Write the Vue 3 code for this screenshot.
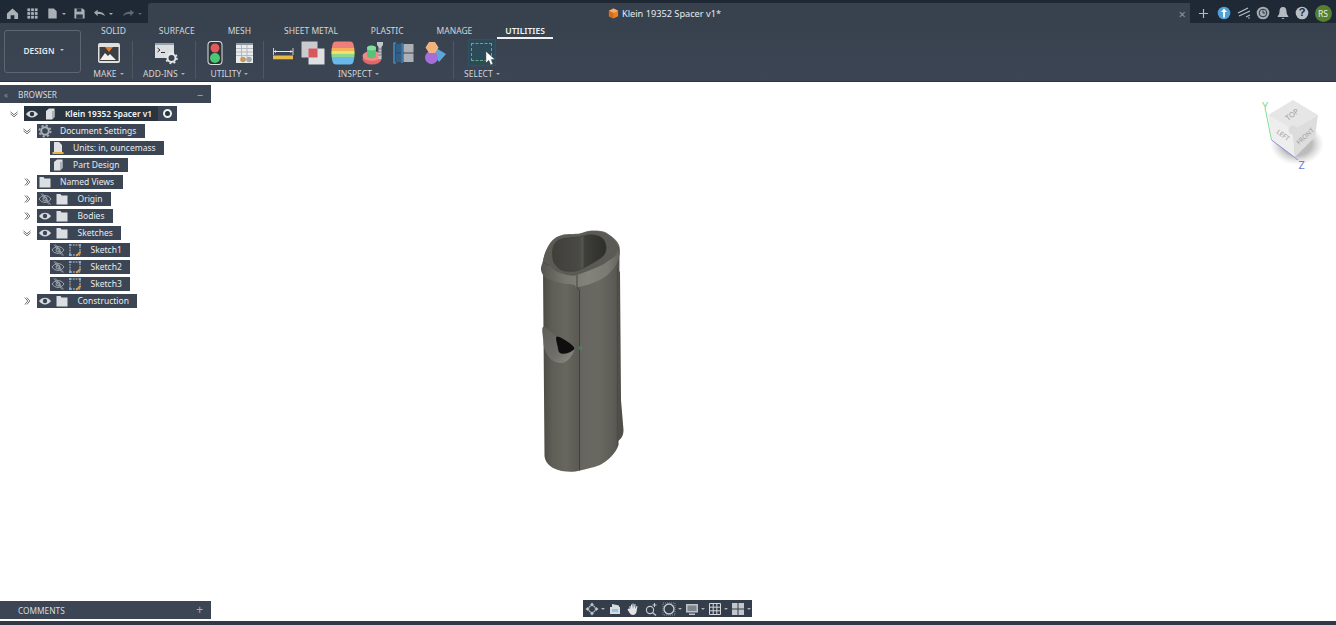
<script setup>
const tabs = [
  { name: 'SOLID' }, { name: 'SURFACE' }, { name: 'MESH' }, { name: 'SHEET METAL' },
  { name: 'PLASTIC' }, { name: 'MANAGE' }, { name: 'UTILITIES', active: true }
]
const rows = [
  { label: 'Document Settings', level: 1, chev: 'down', icons: ['gear'] },
  { label: 'Units: in, ouncemass', level: 2, icons: ['doc'] },
  { label: 'Part Design', level: 2, icons: ['box'] },
  { label: 'Named Views', level: 1, chev: 'right', icons: ['folder'] },
  { label: 'Origin', level: 1, chev: 'right', icons: ['off', 'folder'] },
  { label: 'Bodies', level: 1, chev: 'right', icons: ['eye', 'folder'] },
  { label: 'Sketches', level: 1, chev: 'down', icons: ['eye', 'folder'] },
  { label: 'Sketch1', level: 2, icons: ['off', 'sketch'] },
  { label: 'Sketch2', level: 2, icons: ['off', 'sketch'] },
  { label: 'Sketch3', level: 2, icons: ['off', 'sketch'] },
  { label: 'Construction', level: 1, chev: 'right', icons: ['eye', 'folder'] }
]

// closed Catmull-Rom curve through traced outline points of the 3D model
function smooth(p) {
  const n = p.length
  let d = `M${p[0][0]} ${p[0][1]}`
  for (let i = 0; i < n; i++) {
    const a = p[(i - 1 + n) % n], b = p[i], c = p[(i + 1) % n], e = p[(i + 2) % n]
    const c1 = [b[0] + (c[0] - a[0]) / 6, b[1] + (c[1] - a[1]) / 6]
    const c2 = [c[0] - (e[0] - b[0]) / 6, c[1] - (e[1] - b[1]) / 6]
    d += `C${c1[0].toFixed(1)} ${c1[1].toFixed(1)} ${c2[0].toFixed(1)} ${c2[1].toFixed(1)} ${c[0]} ${c[1]}`
  }
  return d + 'Z'
}
const holePath = smooth([[552.7,249.7],[555.3,243],[562.7,238.7],[579.3,237],[591,234.7],[601,237.3],[605.3,243],[606,249.7],[602.7,256.3],[592.7,263],[579.3,269.7],[571,271.3],[561,269.7],[554.3,263],[552.7,256.3]])
const facePath = smooth([[543.3,261.3],[546,251.3],[552.7,240.7],[562.7,235.3],[579.3,234],[589.3,231.3],[602.7,232],[612.7,238],[617.7,246.3],[616,254.7],[607.7,261.3],[599.3,266.3],[577.7,274.7],[569.3,275.3],[556,271.3],[547.7,264]])
const collarPath = smooth([[541,269.7],[543,261],[546,250.5],[552.7,240],[562.7,234.7],[579.3,233.5],[589.3,230.7],[602.7,231.3],[613,237.5],[619,245],[619.5,254.7],[616,264.7],[606,276.3],[592.7,283],[577,287.3],[574.3,285],[561,283],[546,278]])
const scoopPath = smooth([[543.3,326.7],[556.7,336.7],[568,342],[574.3,348.3],[570,358],[561.7,363],[551.7,360],[545,350],[543.3,340]])
const slotPath = smooth([[556.7,336.7],[568,342],[574.3,348.3],[568,353],[560,353],[557.7,346.7]])
</script>

<template>
  <div class="app">
    <header class="titlebar">
      <div class="qat">
        <svg class="qi" viewBox="0 0 14 14"><path d="M7 1.500 1 7v6h4V9h4v4h4V7z" fill="#aab0b7"/></svg>
        <svg class="qi" viewBox="0 0 14 14"><g fill="#aab0b7"><rect x="1.500" y="1.500" width="3" height="3"/><rect x="5.500" y="1.500" width="3" height="3"/><rect x="9.500" y="1.500" width="3" height="3"/><rect x="1.500" y="5.500" width="3" height="3"/><rect x="5.500" y="5.500" width="3" height="3"/><rect x="9.500" y="5.500" width="3" height="3"/><rect x="1.500" y="9.500" width="3" height="3"/><rect x="5.500" y="9.500" width="3" height="3"/><rect x="9.500" y="9.500" width="3" height="3"/></g></svg>
        <span class="qgroup">
          <svg class="qi" viewBox="0 0 14 14"><path d="M2.500 1.500h6l3 3v8h-9z" fill="#aab0b7"/></svg>
          <i class="caret"></i>
        </span>
        <svg class="qi" viewBox="0 0 14 14"><path d="M1.500 1.500h9l2 2v9h-11z" fill="#aab0b7"/><rect x="4" y="1.500" width="5" height="3.500" fill="#2a3440"/><rect x="3.500" y="8" width="7" height="4.500" fill="#2a3440"/></svg>
        <span class="qgroup">
          <svg class="qi" viewBox="0 0 14 14"><path d="M1 6 5 3v2c4 0 7 1 8 5-2-2-4-2.500-8-2.500V10z" fill="#a0a6ad"/></svg>
          <i class="caret"></i>
        </span>
        <span class="qgroup dim">
          <svg class="qi" viewBox="0 0 14 14"><path d="M13 6 9 3v2c-4 0-7 1-8 5 2-2 4-2.500 8-2.500V10z" fill="#aeb4bb"/></svg>
          <i class="caret"></i>
        </span>
      </div>
      <div class="doctab">
        <div class="doctitle">
          <svg class="cube-ico" viewBox="0 0 12 12"><path d="M6 .5 11 3v6l-5 2.500L1 9V3z" fill="#e8812a"/><path d="M6 .5 11 3 6 5.500 1 3z" fill="#f6ad62"/><path d="M6 5.500v6L1 9V3z" fill="#d56c1c"/></svg>
          <span>Klein 19352 Spacer v1*</span>
        </div>
        <span class="close">×</span>
      </div>
      <div class="sysicons">
        <svg class="plus" viewBox="0 0 12 12"><path d="M6 1v10M1 6h10" stroke="#b4bac1" stroke-width="1.300"/></svg>
        <svg class="si" viewBox="0 0 14 14"><circle cx="7" cy="7" r="6.300" fill="#4f9fd8"/><path d="M7 2.500 10 6H8v5.500H6V6H4z" fill="#fff"/></svg>
        <svg class="si" viewBox="0 0 14 14"><path d="M1 7 11 2M2 10 13 5M9 11l4-2" stroke="#b7bdc4" stroke-width="1.200" fill="none"/><circle cx="12" cy="12" r=".8" fill="#b7bdc4"/></svg>
        <svg class="si" viewBox="0 0 14 14"><circle cx="7" cy="7" r="6.300" fill="#a5abb2"/><circle cx="7" cy="7" r="3.800" fill="none" stroke="#2a3440" stroke-width="1"/><path d="M7 4.500V7h2.200" stroke="#2a3440" fill="none"/></svg>
        <svg class="si" viewBox="0 0 14 14"><path d="M7 1c-2.500 0-3.500 2-3.500 4.500 0 2-.8 3.500-1.800 4.500v1h10.600v-1c-1-1-1.800-2.500-1.800-4.500C10.500 3 9.500 1 7 1zM5.500 12a1.600 1.600 0 0 0 3 0z" fill="#b4bac1"/></svg>
        <svg class="si" viewBox="0 0 14 14"><circle cx="7" cy="7" r="6.300" fill="#b9bfc6"/><text x="7" y="10.300" text-anchor="middle" class="qmark">?</text></svg>
        <span class="avatar">RS</span>
      </div>
    </header>

    <section class="ribbon">
      <div class="design">DESIGN <i class="caret light"></i></div>
      <div class="tools">
        <nav class="tabs">
          <span v-for="t in tabs" :key="t.name" class="tab" :class="{ active: t.active }">{{ t.name }}</span>
        </nav>
        <div class="panels">
          <div class="panel p-make">
            <div class="picons">
              <svg class="ico" viewBox="0 0 24 24"><rect x="1" y="2" width="22" height="20" rx="2" fill="#dfdfdd"/><rect x="2.500" y="6" width="19" height="14" fill="#3a3f46"/><path d="M8 6h8l-4 5z" fill="#e77c25"/><path d="M3 19l5-7 3 3 2-2 6 6z" fill="#f4f1ec"/></svg>
            </div>
            <div class="plabel">MAKE <i class="caret"></i></div>
          </div>
          <div class="panel p-addins">
            <div class="picons">
              <svg class="ico" viewBox="0 0 24 24"><rect x="1" y="2" width="19" height="15" fill="#dcdfe2"/><rect x="1" y="2" width="19" height="2" fill="#9aa1a8"/><path d="M3.500 7l2.500 2-2.500 2M7 11.500h4" stroke="#333" fill="none"/><circle cx="17.500" cy="17" r="4" fill="#3a4452" stroke="#e6e8ea" stroke-width="2"/><circle cx="17.500" cy="17" r="5.500" fill="none" stroke="#e6e8ea" stroke-width="1.500" stroke-dasharray="2 2.300"/></svg>
            </div>
            <div class="plabel">ADD-INS <i class="caret"></i></div>
          </div>
          <div class="panel p-utility">
            <div class="picons">
              <svg class="ico" viewBox="0 0 24 24"><rect x="4.500" y="0" width="15" height="24" rx="4" fill="#dfe1e3"/><rect x="5.500" y="1" width="13" height="22" rx="3" fill="#2e3338"/><circle cx="12" cy="7" r="4.500" fill="#e35a5a"/><circle cx="12" cy="17" r="5" fill="#48c774"/></svg>
              <svg class="ico" viewBox="0 0 24 24"><rect x="3" y="2" width="17" height="20" fill="#e9ecee"/><path d="M3 3h17" stroke="#8f969d" stroke-width="2"/><path d="M3 7.500h17M3 11h17M3 14.500h17M8.500 4v12M14 4v12" stroke="#a7adb3" stroke-width=".8"/><circle cx="10" cy="18.500" r="2.800" fill="#c69a5a"/><circle cx="16" cy="18.500" r="2.800" fill="#a3a8ad"/></svg>
            </div>
            <div class="plabel">UTILITY <i class="caret"></i></div>
          </div>
          <div class="panel p-inspect">
            <div class="picons">
              <svg class="ico" viewBox="0 0 24 24"><path d="M2.500 7v7M22 7v7" stroke="#c9cdd2"/><path d="M3 10.500h18.500" stroke="#e6e8ea"/><path d="M3 10.500l2-1.500v3zM21.500 10.500l-2-1.500v3z" fill="#e6e8ea"/><rect x="2" y="14.500" width="20" height="3.800" fill="#e8b94b"/></svg>
              <svg class="ico" viewBox="0 0 24 24"><rect x="0.500" y="0.500" width="16" height="16" fill="#c9cbce"/><rect x="7.500" y="7.500" width="16" height="16" fill="#dfe0e2"/><rect x="7.500" y="7.500" width="9" height="9" fill="#d8575e"/></svg>
              <svg class="ico" viewBox="0 0 24 24"><defs><clipPath id="bar"><path d="M5 .5h14c2 0 3 1 3.500 3 1.500 6 1.500 11 0 17-.5 2-1.500 3-3.500 3H5c-2 0-3-1-3.500-3-1.500-6-1.500-11 0-17C2 1.500 3 .5 5 .5z"/></clipPath></defs><g clip-path="url(#bar)"><rect y="0" width="24" height="7" fill="#ef7f7a"/><rect y="7" width="24" height="3" fill="#f5b25a"/><rect y="10" width="24" height="3" fill="#ece36c"/><rect y="13" width="24" height="3" fill="#8ed88c"/><rect y="16" width="24" height="8" fill="#69b8ea"/></g></svg>
              <svg class="ico" viewBox="0 0 24 24"><ellipse cx="10" cy="18" rx="9.500" ry="5.500" fill="#e0666a"/><ellipse cx="10" cy="15" rx="9.500" ry="5" fill="#ef8a84"/><path d="M5 7c0-3 9-3 9 0v8c0 3-9 3-9 0z" fill="#58c27a"/><ellipse cx="9.500" cy="7" rx="4.500" ry="2.500" fill="#84dc9a"/><path d="M15 1h6v3l-1.500 2v12h-3V6L15 4z" fill="#c2c6ca"/><path d="M16.500 8h3M16.500 11h3M16.500 14h3" stroke="#6c7178"/></svg>
              <svg class="ico" viewBox="0 0 24 24"><path d="M4 2H2v20h2M10 2v20" fill="none" stroke="#4d9ddb" stroke-width="1.200"/><rect x="3.500" y="3" width="6" height="8.500" fill="#2f5f86"/><rect x="3.500" y="12.500" width="6" height="8.500" fill="#2f5f86"/><rect x="11.500" y="3" width="10" height="8.500" fill="#adb1b6"/><rect x="11.500" y="12.500" width="10" height="8.500" fill="#adb1b6"/></svg>
              <svg class="ico" viewBox="0 0 24 24"><path d="M14 7 24 13 17 21 11 13z" fill="#5ba7dc"/><circle cx="9.500" cy="16.500" r="6.500" fill="#a66fd8"/><path d="M7 1h6l3.500 5.500L13 12H7L3.500 6.500z" fill="#f1b27e"/></svg>
            </div>
            <div class="plabel">INSPECT <i class="caret"></i></div>
          </div>
          <div class="panel p-select">
            <div class="picons">
              <div class="selbox">
                <span class="dash"></span>
                <svg class="cursor" viewBox="0 0 12 16"><path d="M1 0v13l3.200-3 2 5 2.500-1-2-4.800H11z" fill="#fff" stroke="#333" stroke-width=".5"/></svg>
              </div>
            </div>
            <div class="plabel">SELECT <i class="caret"></i></div>
          </div>
        </div>
      </div>
    </section>

    <main class="viewport">
      <aside class="browser">
        <div class="phead">
          <span class="collapse">«</span>
          <span class="ptitle">BROWSER</span>
          <span class="pbtn">−</span>
        </div>
        <ul class="tree">
          <li class="row lvl0">
            <svg class="chev" viewBox="0 0 10 10"><path d="M1.500 2.800 5 5.800l3.500-3M1.500 4.800 5 7.800l3.500-3" fill="none" stroke="#6f7680"/></svg>
            <div class="pill root">
              <span class="ri"><svg viewBox="0 0 14 14"><path d="M1 7c3-4.500 9-4.500 12 0-3 4.500-9 4.500-12 0z" fill="#d7dbdf"/><circle cx="7" cy="7" r="2.200" fill="#2a3340"/></svg></span>
              <span class="ri"><svg viewBox="0 0 14 14"><path d="M3 4 6 1.500h5.500V10L9 12.500H3z" fill="#dcdfe2"/><path d="M9 4h2.500v6L9 12.500z" fill="#aab0b6"/></svg></span>
              <span class="txt">Klein 19352 Spacer v1</span>
              <span class="radio"><i></i></span>
            </div>
          </li>
          <li v-for="r in rows" :key="r.label" class="row" :class="'lvl' + r.level">
            <svg v-if="r.chev === 'down'" class="chev" viewBox="0 0 10 10"><path d="M1.500 2.800 5 5.800l3.500-3M1.500 4.800 5 7.800l3.500-3" fill="none" stroke="#6f7680"/></svg>
            <svg v-else-if="r.chev === 'right'" class="chev" viewBox="0 0 10 10"><path d="M2.800 1.500 5.800 5l-3 3.500M4.800 1.500 7.800 5l-3 3.500" fill="none" stroke="#6f7680"/></svg>
            <div class="pill">
              <span v-for="(ic, i) in r.icons" :key="i" class="ri">
                <svg v-if="ic === 'eye'" viewBox="0 0 14 14"><path d="M1 7c3-4.500 9-4.500 12 0-3 4.500-9 4.500-12 0z" fill="#d7dbdf"/><circle cx="7" cy="7" r="2.200" fill="#3b4554"/></svg>
                <svg v-else-if="ic === 'off'" viewBox="0 0 14 14"><path d="M1 7c3-4.500 9-4.500 12 0-3 4.500-9 4.500-12 0z" fill="none" stroke="#a4aab1"/><circle cx="7" cy="7" r="2" fill="none" stroke="#a4aab1"/><path d="M3 1.500 11 12.500M4.500 1.500l8 11" stroke="#a4aab1" stroke-width=".8"/></svg>
                <svg v-else-if="ic === 'folder'" viewBox="0 0 14 14"><path d="M1.500 2h4l1 1.500h6V12.500h-11z" fill="#dcdfe2"/></svg>
                <svg v-else-if="ic === 'gear'" viewBox="0 0 14 14"><circle cx="7" cy="7" r="3.800" fill="none" stroke="#a9afb6" stroke-width="2"/><circle cx="7" cy="7" r="5.600" fill="none" stroke="#a9afb6" stroke-width="1.800" stroke-dasharray="2.200 2.200"/></svg>
                <svg v-else-if="ic === 'doc'" viewBox="0 0 14 14"><path d="M3 1h5l3 3v7H3z" fill="#dfe2e5"/><rect x="1.500" y="11" width="11" height="2" fill="#e4b44a"/></svg>
                <svg v-else-if="ic === 'box'" viewBox="0 0 14 14"><path d="M3 4 6 1.500h5.500V10L9 12.500H3z" fill="#dcdfe2"/><path d="M9 4h2.500v6L9 12.500z" fill="#aab0b6"/></svg>
                <svg v-else viewBox="0 0 14 14"><rect x="2" y="2" width="10" height="10" fill="none" stroke="#c8ccd1" stroke-dasharray="1.800 1"/><rect x="1" y="1" width="2" height="2" fill="#6ab2e3"/><rect x="11" y="1" width="2" height="2" fill="#6ab2e3"/><rect x="1" y="11" width="2" height="2" fill="#6ab2e3"/><path d="M8 12l4-4 1.200 1.200-4 4H8z" fill="#e2a04a"/></svg>
              </span>
              <span class="txt">{{ r.label }}</span>
            </div>
          </li>
        </ul>
      </aside>

      <svg class="model" viewBox="520 225 120 260">
        <defs>
          <linearGradient id="bodyG" x1="0" x2="1" y1="0" y2="0">
            <stop offset="0" stop-color="#4c4c46"/>
            <stop offset=".12" stop-color="#5e5d56"/>
            <stop offset=".3" stop-color="#67665f"/>
            <stop offset=".46" stop-color="#5b5a53"/>
            <stop offset=".5" stop-color="#666560"/>
            <stop offset=".72" stop-color="#696861"/>
            <stop offset=".93" stop-color="#5c5b55"/>
            <stop offset="1" stop-color="#4f4e49"/>
          </linearGradient>
          <linearGradient id="ringG" x1="0" x2="1" y1="0" y2="0">
            <stop offset="0" stop-color="#55544e"/>
            <stop offset=".3" stop-color="#77766f"/>
            <stop offset=".6" stop-color="#83827b"/>
            <stop offset=".85" stop-color="#7a7972"/>
            <stop offset="1" stop-color="#64635d"/>
          </linearGradient>
          <linearGradient id="holeG" x1="0" x2="1" y1="0" y2="0">
            <stop offset="0" stop-color="#403f3b"/>
            <stop offset=".5" stop-color="#4a4a45"/>
            <stop offset=".56" stop-color="#55554f"/>
            <stop offset=".6" stop-color="#3e3e3a"/>
            <stop offset="1" stop-color="#2d2d2a"/>
          </linearGradient>
          <linearGradient id="scoopG" x1="0" x2="1" y1="0" y2="1">
            <stop offset="0" stop-color="#5f5e58"/>
            <stop offset=".6" stop-color="#6f6e68"/>
            <stop offset="1" stop-color="#8f8e87"/>
          </linearGradient>
        </defs>
        <path d="M616 268 620 272 621 400 623.500 430C623.500 436 621 439 618 441L616 441z" fill="#4f4e49"/>
        <path d="M543 272 619.500 255 618.500 445C616 453 608 461 600 465C592 468 586 469 580 470.500C572 473 562 472 553 468C548 465 545 461 544.500 456z" fill="url(#bodyG)"/>
        <path :d="collarPath" fill="url(#ringG)"/>
        <path :d="facePath" fill="#5b5a55"/>
        <path :d="holePath" fill="url(#holeG)" stroke="#3a3a36" stroke-width=".6"/>
        <path d="M577 275 577 287.500 579.500 290V470.500" fill="none" stroke="#3a3a33" stroke-width=".8"/>
        <path d="M542.800 262 549 265.500M618 246.500 619.500 255" stroke="#45453f" stroke-width=".6"/>
        <path d="M617.500 268V446" stroke="#45453f" stroke-width=".6"/>
        <path :d="scoopPath" fill="url(#scoopG)"/>
        <path :d="slotPath" fill="#0e0e0e"/>
        <circle cx="580.500" cy="348" r="2" fill="#3f8d64" opacity=".7"/>
      </svg>

      <svg class="vcube" viewBox="1255 95 75 80">
        <defs>
          <radialGradient id="sh"><stop offset=".55" stop-color="#8f8f8f" stop-opacity=".6"/><stop offset="1" stop-color="#bbb" stop-opacity="0"/></radialGradient>
        </defs>
        <ellipse cx="1297" cy="144" rx="27" ry="21" fill="url(#sh)"/>
        <path d="M1268 115 1293 100 1318 115 1293 130z" fill="#e6e6e6"/>
        <path d="M1268 115 1293 130 1295 157 1272 140z" fill="#eeeeee"/>
        <path d="M1293 130 1318 115 1315 137 1295 157z" fill="#dddddd"/>
        <circle cx="1293" cy="130" r="4.500" fill="#dcdcdc"/>
        <path d="M1271.500 140 1265.500 110" stroke="#7fdc9b" stroke-width="1"/>
        <path d="M1271.500 140 1298 160" stroke="#8e93de" stroke-width="1"/>
        <text x="0" y="0" class="cubelabel" transform="translate(1288 121) rotate(-38) scale(1.150)">TOP</text>
        <text x="0" y="0" class="cubelabel" transform="translate(1276 133) rotate(35)">LEFT</text>
        <text x="0" y="0" class="cubelabel" transform="translate(1299 145) rotate(-42)">FRONT</text>
        <text x="1262" y="110" class="axis y">Y</text>
        <text x="1298.500" y="168.500" class="axis z">Z</text>
      </svg>

      <aside class="comments">
        <span class="ptitle">COMMENTS</span>
        <span class="pbtn plusb">+</span>
      </aside>

      <div class="navbar">
        <span class="nb w20">
          <svg viewBox="0 0 14 14"><path d="M7 .5 9 3H5zM7 13.500 5 11h4zM.5 7 3 5v4zM13.500 7 11 9V5z" fill="#c6cacf"/><circle cx="7" cy="7" r="3.500" fill="none" stroke="#c6cacf"/></svg><i class="caret"></i>
        </span>
        <span class="nb"><svg viewBox="0 0 14 14"><path d="M2 5h10v7H2zM4 2l7 1.500v1.500H4z" fill="#d9dcdf"/><rect x="4" y="7" width="6" height="3" fill="#8ec3ea"/></svg></span>
        <span class="nb"><svg viewBox="0 0 14 14"><path d="M3.500 7V4l1 0 .5 3V2.500h1L6.500 6.500V1.500h1l.3 5 .7-4.500h1L9.300 7l1.200-3h1L10.500 10c-.5 2-2 3-3.500 3-2 0-3-1-4-3L1.500 7.500l1-1z" fill="#e2e4e6"/></svg></span>
        <span class="nb"><svg viewBox="0 0 14 14"><circle cx="6" cy="8" r="3.600" fill="none" stroke="#c6cacf" stroke-width="1.100"/><path d="M8.500 10.500 12 13.500" stroke="#c6cacf" stroke-width="1.300"/><path d="M10.500 1v4M8.500 3h4" stroke="#c6cacf"/></svg></span>
        <span class="nb w20"><svg viewBox="0 0 14 14"><circle cx="7" cy="7" r="5" fill="none" stroke="#c6cacf" stroke-width="1.400"/><rect x="1" y="1" width="12" height="12" fill="none" stroke="#888e95" stroke-dasharray="1 1"/></svg><i class="caret"></i></span>
        <span class="nb w20"><svg viewBox="0 0 14 14"><rect x="1" y="2" width="12" height="8.500" fill="#bfc3c8"/><rect x="2.500" y="3.500" width="9" height="5.500" fill="#7e858c"/><rect x="4" y="11.500" width="6" height="1.500" fill="#bfc3c8"/></svg><i class="caret"></i></span>
        <span class="nb w20"><svg viewBox="0 0 14 14"><path d="M1.500 1.500h11v11h-11zM1.500 5.200h11M1.500 8.800h11M5.200 1.500v11M8.800 1.500v11" fill="none" stroke="#d5d8db"/></svg><i class="caret"></i></span>
        <span class="nb w20"><svg viewBox="0 0 14 14"><g fill="#c3c7cb"><rect x="1" y="1" width="5.500" height="5.500"/><rect x="7.500" y="1" width="5.500" height="5.500"/><rect x="1" y="7.500" width="5.500" height="5.500"/><rect x="7.500" y="7.500" width="5.500" height="5.500"/></g></svg><i class="caret"></i></span>
      </div>
    </main>
    <footer class="footer"></footer>
  </div>
</template>

<style scoped>
.app {
  width: 1336px;
  height: 625px;
  display: flex;
  flex-direction: column;
  overflow: hidden;
  background: #fff;
  font-family: "Noto Sans", "Open Sans", sans-serif;
  color: #e6e9ec;
}
.titlebar {
  display: flex;
  height: 23px;
  padding-top: 3px;
  box-sizing: border-box;
  background: #1e2935;
  flex: none;
}
.qat {
  width: 148px;
  display: flex;
  align-items: center;
  padding: 1px 0 0 6px;
  box-sizing: border-box;
  gap: 7px;
}
.qi { width: 13px; height: 13px; display: block; }
.qgroup { display: flex; align-items: center; gap: 3px; }
.qgroup.dim { opacity: .45; margin-left: 2px; }
.caret {
  display: inline-block;
  width: 0;
  height: 0;
  border-left: 2px solid transparent;
  border-right: 2px solid transparent;
  border-top: 2.500px solid #a8aeb5;
  vertical-align: middle;
}
.plabel .caret { margin-left: 1px; }
.caret.light { border-top-color: #bfc4ca; margin-left: 4px; }
.doctab {
  flex: 1;
  background: #38424f;
  display: flex;
  align-items: center;
  position: relative;
  border-radius: 3px 0 0 0;
}
.doctitle {
  display: flex;
  align-items: center;
  gap: 3px;
  margin-left: 460px;
  font-size: 9.200px;
  color: #e8ebee;
}
.cube-ico { width: 11px; height: 11px; }
.close {
  position: absolute;
  right: 4px;
  top: 2px;
  font-size: 13px;
  color: #8c939b;
}
.sysicons {
  width: 146px;
  display: flex;
  align-items: center;
  padding-left: 8px;
  box-sizing: border-box;
}
.plus { width: 11px; height: 11px; margin-right: 8px; }
.si { width: 14px; height: 14px; margin-right: 5.500px; }
.qmark { font-size: 11px; font-weight: 700; fill: #1e2935; font-family: "Liberation Sans", sans-serif; }
.avatar {
  width: 17px;
  height: 17px;
  border-radius: 50%;
  background: #55802f;
  font-size: 8.500px;
  line-height: 17px;
  text-align: center;
  color: #e8efe0;
}
.ribbon {
  height: 59px;
  flex: none;
  background: linear-gradient(#38424f, #3b4553);
  border-bottom: 1px solid #2a3340;
  box-sizing: border-box;
  display: flex;
}
.design {
  width: 77px;
  height: 43px;
  margin: 7px 0 0 4px;
  border: 1px solid #5c6672;
  border-radius: 3px;
  box-sizing: border-box;
  font-size: 8.300px;
  font-weight: 600;
  display: flex;
  align-items: center;
  justify-content: center;
  gap: 2px;
  color: #e4e7ea;
  padding: 0 0 3px 3px;
}
.tools { margin-left: 12px; flex: 1; display: flex; flex-direction: column; }
.tabs {
  display: flex;
  height: 17px;
  margin-top: 1px;
  box-sizing: border-box;
  gap: 17px;
}
.tab {
  font-size: 8.500px;
  line-height: 13px;
  padding: 0 8px;
  color: #d2d6da;
}
.tab.active {
  color: #f2f4f6;
  font-weight: 600;
  border-bottom: 2px solid #eef0f2;
  height: 13px;
}
.panels { display: flex; height: 38px; }
.panel {
  display: flex;
  flex-direction: column;
  align-items: center;
  border-right: 1px solid #4e5865;
  box-sizing: border-box;
  height: 38px;
}
.p-make { width: 40px; padding-right: 8px; }
.p-addins { width: 63px; }
.p-addins .picons { padding-left: 3px; }
.p-utility { width: 68px; }
.p-inspect { width: 190px; }
.p-select { width: 56px; border-right: 0; }
.picons { height: 26px; display: flex; align-items: flex-start; gap: 6.400px; margin-bottom: 1.500px; flex: none; }
.ico { width: 24px; height: 24px; display: block; }
.p-utility .picons { gap: 6px; }
.plabel {
  font-size: 8.500px;
  color: #d2d6da;
  line-height: 10px;
  white-space: nowrap;
}
.selbox {
  width: 28px;
  height: 27px;
  background: #2d4a59;
  margin-top: -2px;
  position: relative;
  border: 1px solid #2f5264;
  box-sizing: border-box;
}
.dash {
  position: absolute;
  left: 2px;
  top: 3px;
  width: 19px;
  height: 16px;
  border: 1.500px dashed #5fae80;
}
.cursor { position: absolute; left: 16px; top: 11px; width: 11px; height: 15px; }
.viewport { flex: 1; position: relative; background: #fff; }
.browser {
  position: absolute;
  left: 0;
  top: 3px;
  width: 211px;
}
.phead {
  height: 18px;
  background: #3b4554;
  display: flex;
  align-items: center;
  box-sizing: border-box;
  padding: 0 8px 0 4px;
}
.collapse { font-size: 8px; color: #8a919a; width: 14px; }
.ptitle { font-size: 8.300px; color: #d8dce0; }
.pbtn { margin-left: auto; font-size: 11px; color: #a8aeb5; line-height: 1; }
.tree { list-style: none; margin: 2px 0 0; padding: 0; }
.row { display: flex; align-items: center; height: 17px; position: relative; }
.row.lvl0 { padding-left: 24px; }
.row.lvl1 { padding-left: 36.500px; }
.row.lvl2 { padding-left: 49.500px; }
.chev { position: absolute; width: 10px; height: 10px; }
.lvl0 .chev { left: 9px; }
.lvl1 .chev { left: 22px; }
.pill {
  display: flex;
  align-items: center;
  height: 14px;
  background: #3b4554;
}
.pill.root { height: 15px; background: #2a3340; }
.ri { width: 16px; height: 14px; display: flex; align-items: center; justify-content: center; margin-right: 1.500px; }
.ri svg { width: 14px; height: 14px; display: block; }
.txt {
  font-size: 8.500px;
  padding: 0 8.500px 0 6px;
  white-space: nowrap;
  color: #e8ebee;
}
.root .txt { font-weight: 600; color: #f5f6f7; padding: 0 6px 0 6px; font-size: 8.300px; }
.radio {
  width: 19px;
  height: 15px;
  background: #3b4554;
  display: flex;
  align-items: center;
  justify-content: center;
}
.radio i {
  width: 5px;
  height: 5px;
  border-radius: 50%;
  border: 2px solid #eef0f2;
  box-sizing: content-box;
  background: #2a3340;
}
.model { position: absolute; left: 520px; top: 143px; width: 120px; height: 260px; }
.vcube { position: absolute; left: 1255px; top: 13px; width: 75px; height: 80px; }
.cubelabel { font-size: 6.500px; fill: #9c9c9c; font-family: "Noto Sans", sans-serif; }
.axis { font-size: 11px; font-family: "Noto Sans", sans-serif; }
.axis.y { fill: #7fdc9b; }
.axis.z { fill: #7077e0; }
.comments {
  position: absolute;
  left: 0;
  bottom: 2px;
  width: 211px;
  height: 18px;
  background: #3b4554;
  display: flex;
  align-items: center;
  padding: 0 8px 0 18px;
  box-sizing: border-box;
}
.plusb { font-size: 12px; }
.navbar {
  position: absolute;
  left: 583px;
  bottom: 4px;
  height: 17px;
  width: 169px;
  box-sizing: border-box;
  background: #343d4a;
  display: flex;
  align-items: center;
}
.nb { width: 18px; display: flex; align-items: center; justify-content: center; gap: 2px; flex: none; }
.nb svg { width: 14px; height: 14px; display: block; }
.nb.w20 { width: 23px; }
.footer { height: 4px; background: #303945; flex: none; }
</style>
